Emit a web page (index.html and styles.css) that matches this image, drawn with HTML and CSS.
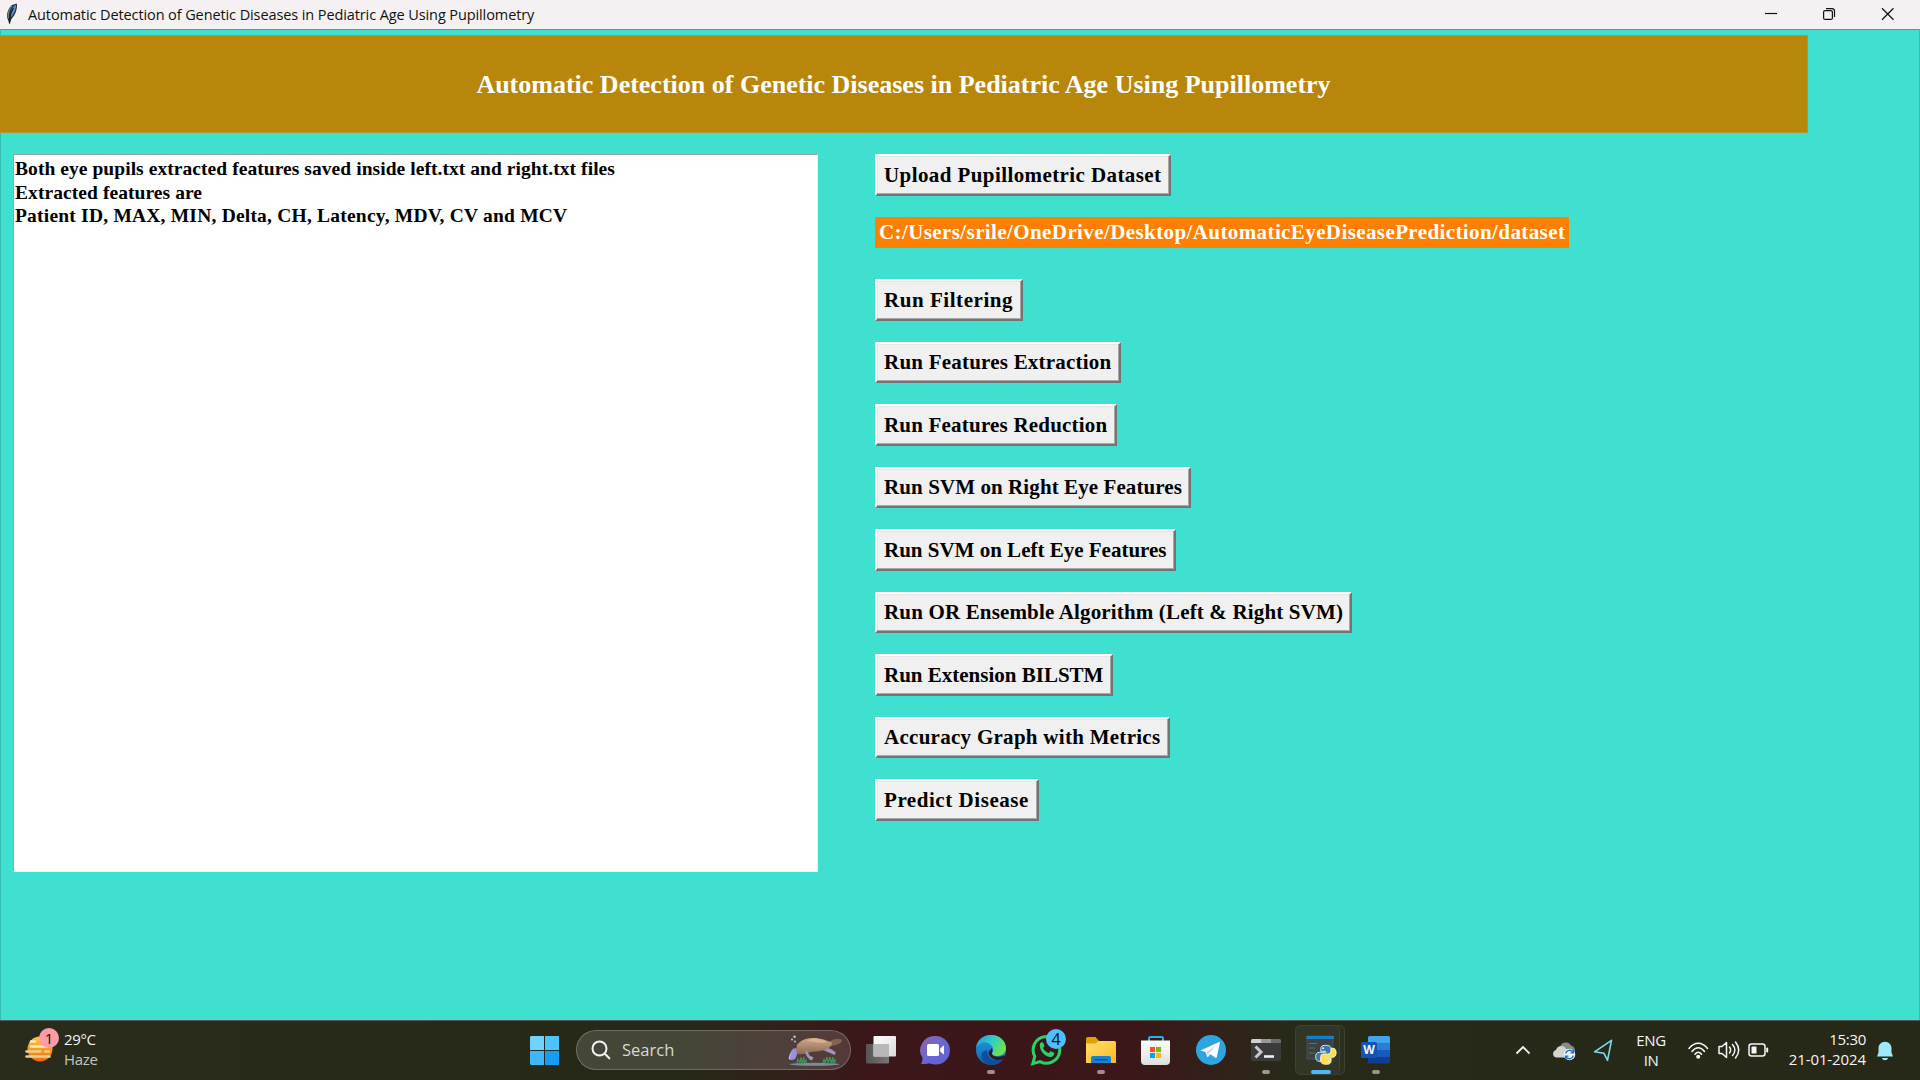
FILE: index.html
```
<!DOCTYPE html>
<html lang="en">
<head>
<meta charset="utf-8">
<title>Automatic Detection of Genetic Diseases in Pediatric Age Using Pupillometry</title>
<link rel="stylesheet" href="styles.css">
</head>
<body>
<header class="titlebar">
  <svg class="feather" width="14" height="22" viewBox="0 0 14 22"><path d="M4.500 21 2.600 16C1 12 3 5 7 2l4.800-1.500C12.800 5 10.500 12 6.500 16z" fill="#26354a"/><path d="M5.500 14.500C5 10 7 4 11 1.800 11 6 9 11.500 5.500 14.500z" fill="#5d94d6"/><path d="M3.500 15C2.500 12 4 6 7 3" fill="none" stroke="#8a939c"/><path d="M4.500 20.500C4.500 13 6.500 8 8.500 5" fill="none" stroke="#1b1b1b" stroke-width="1.300"/></svg>
  <span class="titletext">Automatic Detection of Genetic Diseases in Pediatric Age Using Pupillometry</span>
  <svg class="winctl" width="135" height="29" viewBox="0 0 135 29" fill="none" stroke="#111" stroke-width="1.200"><path d="M0 13.500h12"/><rect x="58.600" y="10.600" width="8.800" height="8.800" rx="1.500"/><path d="M61 8.600h6a2.500 2.500 0 0 1 2.500 2.500v6"/><path d="M117 8.300l11.500 11.400M128.500 8.300l-11.500 11.400"/></svg>
</header>
<main class="client">
  <h1 class="banner">Automatic Detection of Genetic Diseases in Pediatric Age Using Pupillometry</h1>
  <div class="work">
    <section class="log">
      <p class="saved">Both eye pupils extracted features saved inside left.txt and right.txt files</p>
      <p class="intro">Extracted features are</p>
      <p class="names">Patient ID, MAX, MIN, Delta, CH, Latency, MDV, CV and MCV</p>
    </section>
    <section class="actions">
      <button class="btn upload">Upload Pupillometric Dataset</button>
      <div class="path">C:/Users/srile/OneDrive/Desktop/AutomaticEyeDiseasePrediction/dataset</div>
      <button class="btn filter">Run Filtering</button>
      <button class="btn extract">Run Features Extraction</button>
      <button class="btn reduce">Run Features Reduction</button>
      <button class="btn right">Run SVM on Right Eye Features</button>
      <button class="btn left">Run SVM on Left Eye Features</button>
      <button class="btn ensemble">Run OR Ensemble Algorithm (Left &amp; Right SVM)</button>
      <button class="btn bilstm">Run Extension BILSTM</button>
      <button class="btn graph">Accuracy Graph with Metrics</button>
      <button class="btn predict">Predict Disease</button>
    </section>
  </div>
</main>
<footer class="taskbar">
  <svg width="0" height="0" class="defs"><defs>
    <linearGradient id="sun" x1="0" y1="0" x2="0" y2="1"><stop offset="0" stop-color="#ffc83a"/><stop offset="1" stop-color="#f36b0c"/></linearGradient>
    <linearGradient id="chat" x1="0" y1="0" x2="1" y2="1"><stop offset="0" stop-color="#9560a8"/><stop offset=".45" stop-color="#6d66cf"/><stop offset="1" stop-color="#5864d8"/></linearGradient>
    <linearGradient id="edge1" x1="0" y1="0" x2="1" y2=".5"><stop offset="0" stop-color="#2398e0"/><stop offset=".5" stop-color="#31c7d2"/><stop offset="1" stop-color="#6de34d"/></linearGradient>
    <linearGradient id="edge2" x1="0" y1="0" x2="0" y2="1"><stop offset="0" stop-color="#2497dc"/><stop offset="1" stop-color="#0869bb"/></linearGradient>
    <linearGradient id="folder" x1="0" y1="0" x2="1" y2="1"><stop offset="0" stop-color="#ffdf70"/><stop offset="1" stop-color="#fcb91c"/></linearGradient>
    <linearGradient id="bag" x1="0" y1="0" x2="0" y2="1"><stop offset="0" stop-color="#fff"/><stop offset="1" stop-color="#dedede"/></linearGradient>
    <linearGradient id="sq" x1="0" y1="0" x2="1" y2="1"><stop offset="0" stop-color="#fff"/><stop offset="1" stop-color="#d9d9d9"/></linearGradient>
    <linearGradient id="gray" x1="0" y1="0" x2="1" y2="0"><stop offset="0" stop-color="#555"/><stop offset="1" stop-color="#777"/></linearGradient>
    <linearGradient id="fur" x1="0" y1="0" x2="0" y2="1"><stop offset="0" stop-color="#cfa988"/><stop offset="1" stop-color="#8c6a55"/></linearGradient>
  </defs></svg>
  <div class="weather">
    <div class="haze">
      <svg width="34" height="34" viewBox="0 0 34 34"><circle cx="15" cy="17" r="12.500" fill="url(#sun)"/><g stroke="#ffe9b8" stroke-width="2.600" stroke-linecap="round"><path d="M6 9.500h4M6 14.500h18"/><path d="M1.500 19.500h14M20 19.500h4M1.500 24.500h23" stroke="#e8cf94"/></g></svg>
      <span class="badge pink">1</span>
    </div>
    <div class="wtext"><span>29°C</span><span class="dim">Haze</span></div>
  </div>
  <svg class="start" width="29" height="29" viewBox="0 0 29 29"><path d="M1 0h13v14H0V1z" fill="#70d3ff"/><path d="M15 0h14v14H15z" fill="#4cc4fd"/><path d="M0 15h14v14H1l-1-1z" fill="#3db6fb"/><path d="M15 15h14v14H15z" fill="#179cf8"/></svg>
  <div class="search">
    <svg class="lens" width="20" height="20" viewBox="0 0 20 20" fill="none" stroke="#f2f2f2" stroke-linecap="round"><circle cx="8.500" cy="8.500" r="7" stroke-width="2"/><path d="M13.800 13.800l4.500 4.500" stroke-width="2.200"/></svg>
    <span>Search</span>
    <svg class="platypus" width="56" height="32" viewBox="0 0 56 32"><ellipse cx="27.500" cy="29.300" rx="25" ry="1.500" fill="#7391a6"/><path d="M36 9c4-1 7-3 10-4.500 4-1.500 9-1 9 1.200S50 10 46 10.500c-4 .8-6 2-9 2.500z" fill="#846450"/><path d="M37 12l7 2 5 3.500-1.500 2.500-5.500-2.500-5-2z" fill="#9c97bd"/><path d="M8 13C11 7 17 3 26 3c9 0 13 2.500 19 4.500 0 4-4 6.500-9 8-5 1-10 .8-14 2-4 1.500-8 2-11 1.500-3-1-4-3-3-6z" fill="url(#fur)"/><path d="M20 5.500c6-2.500 15-1.500 20 1.500-7 2-14 0-20-1.500z" fill="#e2bf9d" opacity=".6"/><path d="M20 15.500l2.500 5 4 2-1.500 3-2.500-1-2.500-3-2-4z" fill="#9c97bd"/><path d="M7 13c-3 2-5 7-5.500 10.500C3 26.500 9 25 9.500 21c1-2 .5-4-.5-6z" fill="#9990dc"/><path d="M4 19c-1 2-1.500 3.500-1.500 5" fill="none" stroke="#c3bcf2"/><circle cx="9" cy="11.800" r=".9" fill="#222"/><g fill="#a9d4e8"><circle cx="5" cy="4.500" r="1"/><circle cx="7.500" cy="1.800" r="1.200"/><circle cx="8" cy="6.500" r=".9"/></g><path d="M10 28l1-4 2 4 1-6 1 6 2-6v6l2-3v3M36 28l1-4 1 4 2-6 1 6 2-6 1 6 2-6v6l2-4v4" fill="none" stroke="#3b9a58" stroke-width="1.100"/></svg>
  </div>
  <nav class="apps">
    <svg class="app" viewBox="0 0 55 60"><rect x="13" y="24" width="23" height="19.500" rx="1" fill="url(#gray)"/><rect x="20.500" y="16" width="22.500" height="20.500" rx="1" fill="url(#sq)"/><path d="M20.500 24h14.500a1 1 0 0 1 1 1v11.500H20.500z" fill="#b9b8b8"/></svg>
    <svg class="app" viewBox="0 0 55 60"><path d="M27.500 16a14.300 14.300 0 1 1-6 27.200C18.500 44 16 44 13 44c1.500-2.500 1.500-4 1.500-6A14.300 14.300 0 0 1 27.500 16z" fill="url(#chat)"/><rect x="19" y="24" width="12" height="12" rx="1.500" fill="#fff"/><path d="M32.200 28.500l3.800-3.300v9.600l-3.800-3.300z" fill="#fff"/></svg>
    <svg class="app" viewBox="0 0 55 60"><circle cx="28" cy="30" r="15" fill="url(#edge2)"/><path d="M24 30c0 9 7 13 16.500 8.500C36 47 24 47 19 40c-2-5 0-9 5-10z" fill="#0e4f9c"/><path d="M13 28C14 20 20 15 28 15c9 0 15 6 15 13 0 5-4 8-8.500 8-4 0-6-1.500-5.500-3 2-3 1.500-6-1.500-8.500C23 20.500 17 21.500 13 28z" fill="url(#edge1)"/><path d="M29 33c-.5 3.500 6 5 12 2.500l1 1.500-1.500 1.800C34 42 26 39 25.500 32c1-1 2-2 3-4 1.500 2 1 3.500.5 5z" fill="#3a1619"/><rect x="24" y="50" width="8" height="4" rx="2" fill="#a38e90"/></svg>
    <div class="app"><svg width="55" height="60" viewBox="0 0 55 60" fill="none" stroke="#25d366"><path d="M14.800 43.600l2-7.200a13.300 13.300 0 1 1 5.200 5.200z" stroke-width="3"/><path d="M22 23.500c1.500-2 3-1.500 3.500 0l1 2.500c-.5 1-1.500 1.500-1.300 2.200 1.300 2.500 3 3.800 5.300 4.800 1 0 1.500-1.800 2.300-1.800l3.200 1.600c.8.500-.2 3.500-2.500 4.200-6.500.6-13-7-11.500-13.500z" fill="#25d366" stroke="none"/></svg><span class="badge blue">4</span></div>
    <svg class="app" viewBox="0 0 55 60"><path d="M13 43V19a2 2 0 0 1 2-2h7.500l3.500 4h15a2 2 0 0 1 2 2v6H13z" fill="#e09f07"/><path d="M13 23.500h9l3.500-2.500H41a2 2 0 0 1 2 2v20H13z" fill="url(#folder)"/><path d="M18 43v-5a2 2 0 0 1 2-2h16a2 2 0 0 1 2 2v5z" fill="#1683d8"/><path d="M21.500 39.700h13" stroke="#0b4d91" stroke-width="1.400"/><rect x="24" y="50" width="8" height="4" rx="2" fill="#a38e90"/></svg>
    <svg class="app" viewBox="0 0 55 60"><path d="M21 22v-3.500a1.500 1.500 0 0 1 1.500-1.500h11a1.500 1.500 0 0 1 1.500 1.500V22" fill="none" stroke="#2bb0e6" stroke-width="2"/><path d="M13 20.500h29V41a4 4 0 0 1-4 4H17a4 4 0 0 1-4-4z" fill="url(#bag)"/><path d="M22 27h5v5h-5z" fill="#f25022"/><path d="M28 27h5v5h-5z" fill="#7fba00"/><path d="M22 33h5v5h-5z" fill="#00a4ef"/><path d="M28 33h5v5h-5z" fill="#ffb900"/></svg>
    <svg class="app" viewBox="0 0 55 60"><circle cx="28" cy="30" r="15" fill="#2ca5e0"/><path d="M17.500 30.500L35.500 22.200c1-.3 1.500 0 1.300 1L33.800 37c-.3 1-1 1.200-1.800.6l-4.500-3.300-2.300 2.500c-.7.500-1 .3-1.200-.5l-1.500-4.300z" fill="#fff"/><path d="M23.500 32l9.500-6.500-7 7.500-.8 3z" fill="#b9d9ec"/></svg>
    <svg class="app" viewBox="0 0 55 60"><rect x="13" y="19" width="30" height="22" rx="1.500" fill="#3b3b3b"/><path d="M13 23v-2.500a1.500 1.500 0 0 1 1.500-1.500H23v4z" fill="#cfcfcf"/><path d="M23 19h10v4H23z" fill="#999"/><path d="M33 19h8.500a1.500 1.500 0 0 1 1.500 1.500V23H33z" fill="#6d6d6d"/><path d="M17.500 26.500l5.500 5.500-5.500 5.500" fill="none" stroke="#c9c9c9" stroke-width="3"/><path d="M26 36.500h10" stroke="#eee" stroke-width="2.600"/><rect x="24" y="50" width="8" height="4" rx="2" fill="#979791"/></svg>
    <svg class="app" viewBox="0 0 55 60"><path d="M44 5.500h2.500a5 5 0 0 1 5 5v39a5 5 0 0 1-5 5H44" fill="#2c301f" stroke="#3f4334"/><rect x="2.500" y="5.500" width="44" height="49" rx="5" fill="#323627" stroke="#3f4334"/><path d="M14 16h26v23H14z" fill="#3d4147" stroke="#5c6063" stroke-width=".6"/><path d="M13.500 16H41v3H13.500z" fill="#1180cc"/><path d="M16 23.500h8M16 28h6M16 33h6" stroke="#3f8648" stroke-width="1.200"/><g transform="translate(32.500 34.800)"><path id="snake" d="M0-9.500c-4.500 0-4.800 2-4.800 3.800V-3.500H.3v1H-6c-3 0-3.800 2-3.800 4.500S-9 6.500-6.500 6.500h1.700V4c0-2 1.500-3.200 3.200-3.200H3c2 0 2.600-1.400 2.600-2.800v-4.200C5.600-8.500 3.500-9.500 0-9.500z" fill="#3a78ac" stroke="#e6eef3" stroke-width=".9"/><use href="#snake" opacity="0"/><path d="M0-9.500c-4.500 0-4.800 2-4.800 3.800V-3.500H.3v1H-6c-3 0-3.800 2-3.800 4.500S-9 6.500-6.500 6.500h1.700V4c0-2 1.500-3.200 3.200-3.200H3c2 0 2.600-1.400 2.600-2.800v-4.200C5.600-8.500 3.500-9.500 0-9.500z" transform="rotate(180 .4 0)" fill="#ffdc4d" stroke="#fff5cc" stroke-width=".9"/><circle cx="-2.400" cy="-6.600" r=".9" fill="#fff"/><circle cx="3.200" cy="6.600" r=".9" fill="#fff"/></g><rect x="18" y="50" width="20" height="4" rx="2" fill="#4cb8f5"/></svg>
    <div class="app word"><svg width="55" height="60" viewBox="0 0 55 60"><path d="M20 23v-5.500a1.500 1.500 0 0 1 1.500-1.500h19a1.500 1.500 0 0 1 1.500 1.500V23z" fill="#41a5ee"/><path d="M20 23h22v7H20z" fill="#2b7cd3"/><path d="M20 30h22v7H20z" fill="#185abd"/><path d="M20 37h22v5a1.500 1.500 0 0 1-1.500 1.500h-19A1.500 1.500 0 0 1 20 42z" fill="#103f91"/><rect x="13" y="22" width="16" height="16" rx="1.500" fill="#1553b5"/><rect x="24" y="50" width="8" height="4" rx="2" fill="#979791"/></svg><b>W</b></div>
  </nav>
  <div class="tray">
    <svg width="106" height="60" viewBox="0 0 106 60" fill="none"><path d="M9.500 33.500l6.500-6.500 6.500 6.500" stroke="#f5f5f5" stroke-width="1.900"/><path d="M53 27a6 6 0 0 1 11-1.500c5 1.500 5 7 2 9.500H55z" fill="#888a83"/><path d="M50 37.500c-5 0-5-6.500-1-7.500 1-4.500 8-5.500 10-1 6 0 5 8.500 0 8.500z" fill="#d3d4d0"/><circle cx="62.500" cy="34.500" r="5.700" fill="#f2f7fc"/><path d="M58.700 33.500a4 4 0 0 1 7.300-1.400M66.300 35.500a4 4 0 0 1-7.300 1.400M66.500 29.800v3h-3M58.500 39.200v-3h3" stroke="#176fc9" stroke-width="1.300"/><path d="M104.500 20.500L87.500 32l9.500 1.500 3.500 7z" transform="translate(0 -.2)" stroke="#7fd9ec" stroke-width="1.600" stroke-linejoin="round"/></svg>
    <div class="lang"><span>ENG</span><span>IN</span></div>
    <svg class="status" width="82" height="60" viewBox="0 0 82 60" fill="none" stroke="#f5f5f5" stroke-width="1.500" stroke-linecap="round"><path d="M1 28.500c5.500-7 13-7 18.500 0M4 31.500c4-5 8.500-5 12.500 0M7 34.300c2-2.600 4.500-2.600 6.500 0"/><circle cx="10.200" cy="36.800" r="1.300" fill="#f5f5f5"/><path d="M31 26.500h3l4.500-4v15l-4.500-4h-3z" stroke-linejoin="round"/><path d="M41.500 27c1.500 2 1.500 4 0 6M44.500 24.500c3 3.500 3 7.500 0 11M47.500 22c4 5 4 11 0 16"/><rect x="61" y="24" width="16" height="12" rx="2.500"/><rect x="63.500" y="26.500" width="5" height="7" rx=".5" fill="#f5f5f5" stroke="none"/><path d="M79.200 28.500v3" stroke-width="2"/></svg>
    <div class="clock"><span>15:30</span><span class="date">21-01-2024</span></div>
    <svg class="bell" width="18" height="20" viewBox="0 0 18 20" fill="#9be9fb"><path d="M9 .8c4 0 6.500 3 6.500 6.500v4.200l1.500 4H1l1.500-4V7.300C2.500 3.800 5 .8 9 .8zM6 17h6c-.5 3-5.500 3-6 0z"/></svg>
  </div>
</footer>
</body>
</html>
```
FILE: styles.css
```
*{box-sizing:border-box;margin:0}
body{width:1920px;height:1080px;overflow:hidden;background:#40e0d0;font-family:"Liberation Serif","Times New Roman",serif;display:flex;flex-direction:column}

/* window title bar */
.titlebar{height:29px;flex:none;background:#f5f1f2;display:flex;align-items:flex-start;color:#111}
.feather{margin:3px 0 0 5px}
.titletext{margin-left:9px;font:14.5px/29px "Open Sans",sans-serif;letter-spacing:-.1px;white-space:nowrap}
.winctl{margin:0 20px 0 auto}

/* client area */
.client{flex:1;min-height:0;border:1px solid #35beb2;border-top-color:#38aaa0;border-bottom:0}
.banner{margin:5px 0 0 -1px;width:1808px;height:98px;background:#b8860b;border:1px solid #a79a3a;border-left:0;color:#fff;font-size:26px;line-height:97px;text-align:center;white-space:nowrap}
.work{display:flex;align-items:flex-start;padding:21px 0 0 12px}
.log{width:805px;height:718px;background:#fff;border:1px solid #a0a0a0;border-right-color:#e0f6f3;border-bottom-color:#e0f6f3;padding:2px 1px;font-size:19.5px;font-weight:bold;line-height:23.6px;color:#000;white-space:nowrap}
.saved{letter-spacing:.06px}
.intro{letter-spacing:.07px}
.names{letter-spacing:.21px}
.actions{display:flex;flex-direction:column;align-items:flex-start;margin-left:57px}
.btn,.path{font:bold 21px "Liberation Serif","Times New Roman",serif;white-space:nowrap;color:#000}
.btn{height:41.5px;margin-bottom:21px;padding:1px 0 0 7px;text-align:left;background:#f0f0f0;border:2px solid;border-color:#fff #747474 #747474 #fff;border-radius:0;box-shadow:inset -1px -1px #a8a8a8,inset 1px 1px #e6e6e6}
.path{height:31.5px;width:694px;margin-bottom:31px;padding-left:4px;line-height:31px;letter-spacing:.4px;background:#ff8000;color:#fff}
.upload{width:296px;letter-spacing:.41px}
.filter{width:147.5px;letter-spacing:.55px}
.extract{width:246px;letter-spacing:.22px}
.reduce{width:242px;letter-spacing:.2px}
.right{width:316px;letter-spacing:.09px}
.left{width:301px}
.ensemble{width:477px;letter-spacing:.16px}
.bilstm{width:237.5px}
.graph{width:295px;letter-spacing:.28px}
.predict{width:164px;letter-spacing:.55px}

/* taskbar */
.taskbar{height:60px;flex:none;display:flex;align-items:flex-start;border-top:1px solid #55584c;background:linear-gradient(90deg,#292c1a 0,#262918 680px,#33201a 790px,#3c1619 870px,#3b1719 1130px,#33201a 1210px,#282a19 1290px,#262918 1920px);color:#f5f5f5;font:15px/20px "Open Sans",sans-serif}
.taskbar>*{margin-top:-1px}
.defs{position:absolute}
.weather{display:flex;width:530px;padding-left:25px}
.haze{position:relative;height:34px;margin-top:12px}
.badge{position:absolute;width:20px;height:20px;border-radius:50%;color:#111;font-size:15px;line-height:20px;text-align:center}
.pink{left:14px;top:-4px;background:#fe9ba6}
.blue{left:28px;top:9px;background:#4cc0fd;font-size:16px}
.wtext{display:flex;flex-direction:column;margin:9px 0 0 5px;letter-spacing:-.35px}
.dim{color:#c4c4bf}
.start{margin-top:15px}
.search{display:flex;align-items:center;width:275px;height:40px;margin:9px 0 0 17px;padding:0 8px 0 14px;border:1px solid rgba(255,255,255,.22);border-radius:20px;background:rgba(255,255,255,.14);color:#d9d9d4;font-size:16.5px}
.search span{margin:0 auto 0 11px}
.platypus{margin:2px -1px 0 0}
.apps{display:flex;margin-left:2px}
.app{width:55px;height:60px;flex:none;position:relative}
.word b{position:absolute;left:13px;top:22px;width:16px;font-size:12px;line-height:16px;text-align:center}
.tray{display:flex;margin-left:auto}
.tray svg{flex:none}
.lang{display:flex;flex-direction:column;align-items:center;width:40px;margin:10px 0 0 18px;letter-spacing:-.4px}
.status{margin-left:17px}
.clock{display:flex;flex-direction:column;align-items:flex-end;width:96px;margin-top:9px;letter-spacing:-.3px}
.date{letter-spacing:-.1px}
.bell{margin:21px 26px 0 10px}
```
